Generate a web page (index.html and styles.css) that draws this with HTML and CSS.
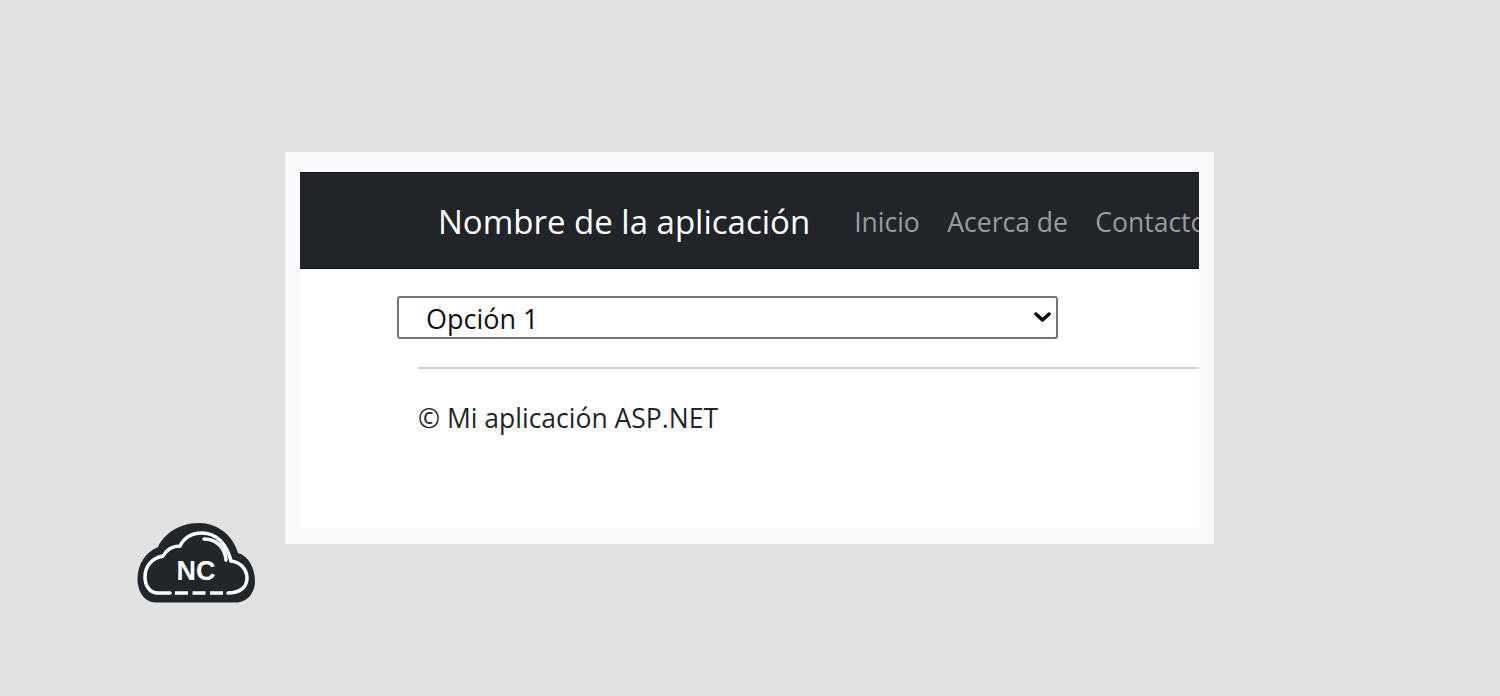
FILE: index.html
```html
<!DOCTYPE html>
<html lang="es">
<head>
<meta charset="utf-8">
<title>Nombre de la aplicación</title>
<link rel="stylesheet" href="styles.css">
</head>
<body>
<main class="frame">
  <div class="app">
    <nav class="navbar">
      <a class="brand">Nombre de la aplicación</a>
      <a class="link">Inicio</a>
      <a class="link">Acerca de</a>
      <a class="link">Contacto</a>
    </nav>
    <div class="content">
      <div class="select-wrap">
        <select class="picker"><option>Opción 1</option></select>
        <svg class="chevron" viewBox="0 0 17 10" width="17" height="10" aria-hidden="true"><path d="M2 2L8.500 8L15 2"/></svg>
      </div>
      <hr class="rule">
      <p class="foot">© Mi aplicación ASP.NET</p>
    </div>
  </div>
</main>
<svg class="logo" viewBox="0 0 118 80" width="118" height="80" aria-label="NC">
  <path class="cloud" d="M19 79.500C7 79.500 0.500 68 0.500 56C0.500 41 9 29 21 24C27 11 42 0 62 0C80 0 96 12 101 30C112 33 118 46 118 58C118 70 110 79.500 99 79.500Z"/>
  <path class="line" d="M33 70H21C12 70 8 62 8 54C8 43 15 35 26 33C30 26 36 23 43 23C48 13 56 10 65 10C80 10 90 22 94 38C103 39 110 46 110 55C110 65 102 70 91 70"/>
  <path class="line" d="M67 16C79 16 88 24 89 37"/>
  <path class="line dash" d="M38 70H88"/>
  <text class="nc" x="59" y="57" text-anchor="middle">NC</text>
</svg>
</body>
</html>
```
FILE: styles.css
```css
* { box-sizing: border-box; }
html, body { margin: 0; height: 696px; overflow: hidden; }
body { background: #e2e2e2; position: relative; padding: 152px 0 0 285px; font-family: "Open Sans", "Noto Sans", sans-serif; }
.frame { width: 929px; height: 392px; background: #f8f9fa; padding: 20px 15px 16px; }
.app { height: 356px; background: #fff; overflow: hidden; }
.navbar { height: 97px; background: #212529; display: flex; align-items: center; padding: 2px 0 0 138px; white-space: nowrap; overflow: hidden; border-top: 1px solid #111; border-bottom: 1px solid #111; }
.brand { color: #fff; font-size: 33px; margin-right: 44px; flex: none; }
.link { color: #9a9b9d; font-size: 26.500px; margin-right: 27.500px; flex: none; }
.content { padding: 27px 0 0 97px; }
.select-wrap { position: relative; width: 661px; }
.picker { display: block; width: 100%; height: 43px; appearance: none; font-family: inherit; font-size: 27px; color: #111; background: #fff; border: 2px solid #767676; border-radius: 3px; padding: 2px 0 0 27px; }
.chevron { position: absolute; right: 7px; top: 16px; }
.chevron path { fill: none; stroke: #000; stroke-width: 3.500; stroke-linecap: round; stroke-linejoin: round; }
.rule { margin: 28px 0 0 21px; border: 0; border-top: 2px solid #cfcfcf; }
.foot { margin: 29px 0 0 21px; font-size: 26.500px; line-height: 40px; color: #212529; }
.logo { position: absolute; left: 137px; top: 523px; }
.cloud { fill: #20262a; }
.line { fill: none; stroke: #fff; stroke-width: 3.500; stroke-linecap: round; }
.dash { stroke-dasharray: 13 4.500; stroke-linecap: butt; }
.nc { fill: #fff; font-family: "Liberation Sans", sans-serif; font-weight: 700; font-size: 27px; }
```
